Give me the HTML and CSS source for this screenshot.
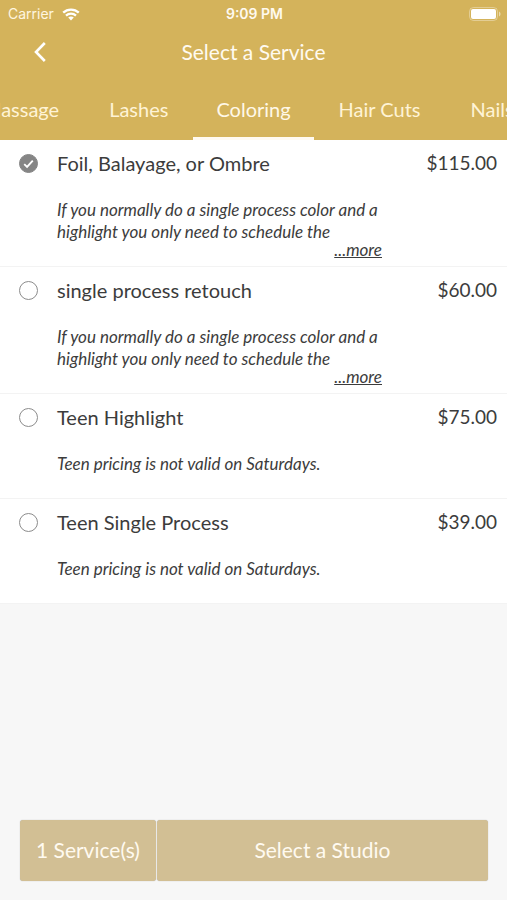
FILE: index.html
```html
<!DOCTYPE html>
<html lang="en">
<head>
<meta charset="utf-8">
<meta name="viewport" content="width=device-width, initial-scale=1">
<title>Select a Service</title>
<link rel="stylesheet" href="styles.css">
</head>
<body>
<header class="header">
  <div class="status">
    <div class="carrier">
      <span>Carrier</span>
      <svg class="wifi" viewBox="0 0 18 13" aria-hidden="true">
        <path d="M1.200 4.700C5.600 .5 12.400 .5 16.800 4.700M4 7.600c2.800-2.600 7.200-2.600 10 0" fill="none" stroke="currentColor" stroke-width="2.300"/>
        <path d="M6.200 9.600c1.600-1.500 4-1.500 5.600 0L9 12.500z" fill="currentColor"/>
      </svg>
    </div>
    <div class="time">9:09 PM</div>
    <div class="power">
      <svg class="battery" viewBox="0 0 32 14" aria-hidden="true">
        <rect x=".5" y=".5" width="28" height="13" rx="4" fill="none" stroke="#fff" stroke-opacity=".35"/>
        <rect x="2" y="2" width="25" height="10" rx="2" fill="#fff"/>
        <path d="M30 4.500c2 .8 2 4.200 0 5z" fill="#fff" fill-opacity=".5"/>
      </svg>
    </div>
  </div>
  <div class="titlebar">
    <button class="back" type="button" aria-label="Back">
      <svg viewBox="0 0 12 20" aria-hidden="true"><path d="M10.800 1 2 10l8.800 9" fill="none" stroke="currentColor" stroke-width="2.600"/></svg>
    </button>
    <h1 class="title">Select a Service</h1>
  </div>
  <nav class="tabs" aria-label="Service categories">
    <div class="tabs-side tabs-before">
      <a class="tab" href="#massage">Massage</a>
      <a class="tab" href="#lashes">Lashes</a>
    </div>
    <a class="tab tab-active" href="#coloring" aria-current="page">Coloring</a>
    <div class="tabs-side">
      <a class="tab" href="#haircuts">Hair Cuts</a>
      <a class="tab" href="#nails">Nails</a>
    </div>
  </nav>
</header>
<main class="services">
  <section class="service">
    <span class="check">
      <input type="checkbox" id="s1" checked>
      <svg class="tick" viewBox="0 0 20 20" aria-hidden="true"><path d="M5.500 10.700l3 2.800 6-6.500" fill="none" stroke="#fff" stroke-width="2"/></svg>
    </span>
    <label class="name" for="s1">Foil, Balayage, or Ombre</label>
    <span class="price">$115.00</span>
    <div class="details">
      <p class="text">If you normally do a single process color and a<br>highlight you only need to schedule the</p>
      <a class="more" href="#s1">...more</a>
    </div>
  </section>
  <section class="service">
    <span class="check"><input type="checkbox" id="s2"></span>
    <label class="name" for="s2">single process retouch</label>
    <span class="price">$60.00</span>
    <div class="details">
      <p class="text">If you normally do a single process color and a<br>highlight you only need to schedule the</p>
      <a class="more" href="#s2">...more</a>
    </div>
  </section>
  <section class="service">
    <span class="check"><input type="checkbox" id="s3"></span>
    <label class="name" for="s3">Teen Highlight</label>
    <span class="price">$75.00</span>
    <div class="details">
      <p class="text">Teen pricing is not valid on Saturdays.</p>
    </div>
  </section>
  <section class="service">
    <span class="check"><input type="checkbox" id="s4"></span>
    <label class="name" for="s4">Teen Single Process</label>
    <span class="price">$39.00</span>
    <div class="details">
      <p class="text">Teen pricing is not valid on Saturdays.</p>
    </div>
  </section>
</main>
<footer class="footer">
  <button class="action" type="button">1 Service(s)</button>
  <button class="action action-main" type="button">Select a Studio</button>
</footer>
</body>
</html>
```
FILE: styles.css
```css
* {
  box-sizing: border-box;
}

body {
  margin: 0;
  min-height: 100vh;
  display: flex;
  flex-direction: column;
  background: #f7f7f7;
  color: #3c3c3c;
  font: 20px/28px Lato, "Liberation Sans", sans-serif;
}

.header {
  background: #d4b35b;
  color: #fffaf0;
}

.status {
  display: grid;
  grid-template-columns: 1fr auto 1fr;
  align-items: center;
  height: 28px;
  padding: 0 6px 0 8px;
  font: 14px/20px Inter, "Liberation Sans", sans-serif;
}

.carrier {
  display: flex;
  align-items: center;
  gap: 8px;
  color: #fff6e0;
}

.wifi {
  width: 18px;
  height: 13px;
  color: #fff;
}

.time {
  font-weight: 600;
}

.power {
  display: flex;
  justify-content: flex-end;
}

.battery {
  width: 32px;
  height: 14px;
}

.titlebar {
  display: grid;
  grid-template-columns: 80px 1fr 80px;
  align-items: center;
  height: 48px;
}

.back {
  display: flex;
  justify-content: center;
  padding: 0;
  border: 0;
  background: none;
  color: #fff;
}

.back svg {
  width: 12px;
  height: 20px;
}

.title {
  margin: 0;
  font-size: 21px;
  font-weight: 400;
  text-align: center;
}

.tabs {
  display: flex;
  height: 64px;
  overflow: hidden;
}

.tabs-side {
  display: flex;
  flex: 1 1 0;
  min-width: 0;
}

.tabs-before {
  justify-content: flex-end;
}

.tab {
  flex: none;
  padding: 19px 25px 0;
  border-bottom: 3px solid transparent;
  color: #fff3d6;
  text-decoration: none;
}

.tab-active {
  padding: 19px 23px 0;
  border-color: #fffaf0;
  color: #fff8e8;
}

.service {
  display: grid;
  grid-template-columns: 57px 1fr auto;
  align-items: center;
  padding: 9px 10px 0 0;
  border-bottom: 1px solid #f3f3f3;
  background: #fff;
}

.check {
  display: grid;
  place-items: center;
}

.check > * {
  grid-area: 1 / 1;
}

.check input {
  appearance: none;
  width: 19px;
  height: 19px;
  margin: 0;
  border: 1px solid #8c8c8c;
  border-radius: 50%;
}

.check input:checked {
  background: #858585;
  border-color: #858585;
}

.tick {
  width: 19px;
  height: 19px;
  pointer-events: none;
}

.price {
  font-size: 19px;
}

.details {
  grid-column: 2;
  display: flex;
  flex-direction: column;
  width: 325px;
  padding: 22px 0 9px;
  font-size: 17px;
  line-height: 22px;
  font-style: italic;
}

.text {
  margin: 0;
  white-space: nowrap;
}

.text:last-child {
  padding-bottom: 14px;
}

.more {
  align-self: flex-end;
  line-height: 14px;
  color: inherit;
}

.footer {
  display: flex;
  gap: 1px;
  margin-top: auto;
  padding: 0 19px 19px 20px;
}

.action {
  height: 61px;
  padding: 0 16px 2px;
  border: 0;
  border-radius: 3px;
  background: #d2bf94;
  box-shadow: 0 0 1px #a9a9a9;
  color: #fffaf0;
  font: inherit;
  font-size: 21px;
}

.action-main {
  flex: 1;
}
```
